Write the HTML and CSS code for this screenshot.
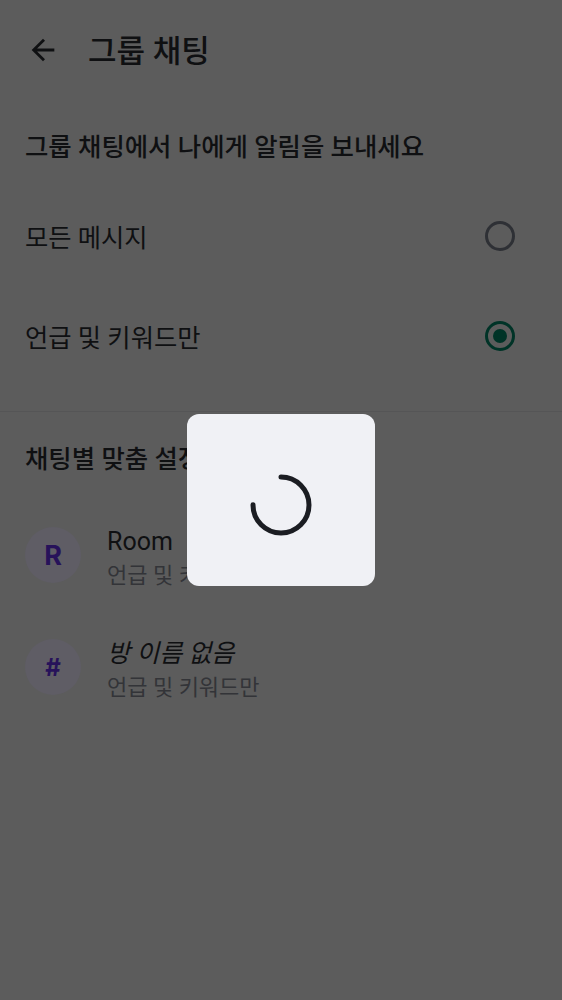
FILE: index.html
```html
<!DOCTYPE html>
<html lang="ko">
<head>
<meta charset="utf-8">
<title>그룹 채팅</title>
<link rel="stylesheet" href="styles.css">
</head>
<body>
<div class="screen">
  <header class="topbar">
    <svg class="back" viewBox="0 0 24 24" width="34" height="34"><path d="M20 11H7.83l5.59-5.59L12 4l-8 8 8 8 1.41-1.41L7.83 13H20v-2z"/></svg>
    <h1 class="title">그룹 채팅</h1>
  </header>

  <h2 class="section-title first">그룹 채팅에서 나에게 알림을 보내세요</h2>

  <div class="option">
    <span class="option-label">모든 메시지</span>
    <span class="radio"></span>
  </div>
  <div class="option">
    <span class="option-label">언급 및 키워드만</span>
    <span class="radio checked"><span class="dot"></span></span>
  </div>

  <div class="divider"></div>

  <h2 class="section-title second">채팅별 맞춤 설정</h2>

  <div class="room">
    <div class="avatar">R</div>
    <div class="room-text">
      <div class="room-name">Room</div>
      <div class="room-sub">언급 및 키워드만</div>
    </div>
  </div>
  <div class="room">
    <div class="avatar hash">#</div>
    <div class="room-text">
      <div class="room-name italic">방 이름 없음</div>
      <div class="room-sub">언급 및 키워드만</div>
    </div>
  </div>
</div>

<div class="overlay">
  <div class="dialog">
    <svg class="spinner" viewBox="0 0 70 70" width="70" height="70">
      <circle cx="35" cy="35" r="28" fill="none" stroke="#1b1d22" stroke-width="5" stroke-linecap="round" stroke-dasharray="132 44" transform="rotate(-90 35 35)"/>
    </svg>
  </div>
</div>
</body>
</html>
```

FILE: styles.css
```css
html, body {
  margin: 0;
  padding: 0;
}
body {
  background: #5c5c5c;
  font-family: Roboto, "Noto Sans CJK KR", sans-serif;
  color: #0f1012;
  width: 562px;
  height: 1000px;
  overflow: hidden;
}
.screen {
  display: flex;
  flex-direction: column;
}
.topbar {
  height: 100px;
  display: flex;
  align-items: center;
  padding-left: 26px;
  box-sizing: border-box;
}
.back {
  fill: #0f1012;
  flex: none;
}
.title {
  margin: 0 0 0 28px;
  padding-top: 4px;
  font-size: 31px;
  font-weight: 500;
  line-height: 36px;
}
.section-title {
  margin: 0;
  padding: 32px 25px 0;
  font-size: 25.4px;
  font-weight: 500;
  line-height: 30px;
}
.section-title.first {
  height: 54px;
}
.section-title.second {
  height: 55px;
}
.option {
  height: 100px;
  display: flex;
  align-items: center;
  justify-content: space-between;
  padding: 0 47px 0 25px;
}
.option-label {
  padding-top: 6px;
  font-size: 25.3px;
  line-height: 30px;
}
.radio {
  width: 24px;
  height: 24px;
  border: 3px solid #2e3035;
  border-radius: 50%;
  display: flex;
  align-items: center;
  justify-content: center;
}
.radio.checked {
  border-color: #003327;
}
.dot {
  width: 14px;
  height: 14px;
  border-radius: 50%;
  background: #003327;
}
.divider {
  margin-top: 25px;
  height: 1px;
  background: #555556;
}
.room {
  height: 112px;
  display: flex;
  align-items: center;
  padding-left: 25px;
  gap: 26px;
}
.avatar {
  width: 56px;
  height: 56px;
  border-radius: 50%;
  background: #5f5d65;
  color: #27125a;
  font-family: "Inter", "Noto Sans", sans-serif;
  font-weight: 700;
  font-size: 27px;
  display: flex;
  align-items: center;
  justify-content: center;
  flex: none;
}
.avatar.hash {
  font-size: 24px;
}
.room-text {
  display: flex;
  flex-direction: column;
  padding-top: 6px;
}
.room-name {
  font-size: 25px;
  line-height: 30px;
}
.room-name.italic {
  font-style: italic;
}
.room-sub {
  margin-top: 5px;
  font-size: 22px;
  line-height: 28px;
  color: #333438;
}
.overlay {
  position: fixed;
  inset: 0;
  display: flex;
  align-items: center;
  justify-content: center;
}
.dialog {
  width: 188px;
  height: 172px;
  background: #f0f1f5;
  border-radius: 12px;
  display: flex;
  align-items: center;
  justify-content: center;
}
.spinner {
  margin-top: 10px;
}
```
